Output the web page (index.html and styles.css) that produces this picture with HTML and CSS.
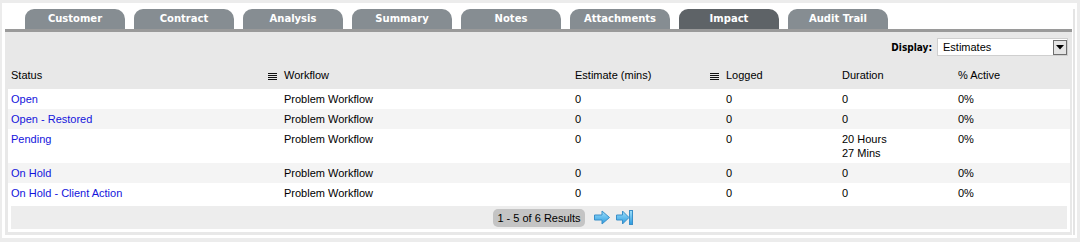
FILE: index.html
```html
<!DOCTYPE html>
<html lang="en">
<head>
  <meta charset="UTF-8">
  <title>Impact</title>
  <link rel="stylesheet" href="styles.css">
</head>
<body>
  <div class="page">
    <div class="frame">
      <ul class="tabs">
        <li>Customer</li>
        <li>Contract</li>
        <li>Analysis</li>
        <li>Summary</li>
        <li>Notes</li>
        <li>Attachments</li>
        <li class="active">Impact</li>
        <li>Audit Trail</li>
      </ul>

      <div class="panel">
        <div class="toolbar">
          <span class="toolbar-label">Display:</span>
          <div class="select">
            <span class="select-text">Estimates</span>
            <span class="select-btn">
              <svg width="8" height="5" viewBox="0 0 8 5"><polygon points="0,0 8,0 4,4.5" fill="#000"/></svg>
            </span>
          </div>
        </div>

        <table class="grid">
          <colgroup>
            <col style="width:273px">
            <col style="width:291px">
            <col style="width:151px">
            <col style="width:116px">
            <col style="width:116px">
            <col style="width:115px">
          </colgroup>
          <thead>
            <tr>
              <th>Status</th>
              <th><svg class="sort-icon" width="9" height="7" viewBox="0 0 9 7"><rect y="0" width="9" height="1"/><rect y="2" width="9" height="1"/><rect y="4" width="9" height="1"/><rect y="6" width="9" height="1"/></svg>Workflow</th>
              <th>Estimate (mins)</th>
              <th><svg class="sort-icon" width="9" height="7" viewBox="0 0 9 7"><rect y="0" width="9" height="1"/><rect y="2" width="9" height="1"/><rect y="4" width="9" height="1"/><rect y="6" width="9" height="1"/></svg>Logged</th>
              <th>Duration</th>
              <th>% Active</th>
            </tr>
          </thead>
          <tbody>
            <tr>
              <td><a href="#">Open</a></td>
              <td>Problem Workflow</td>
              <td>0</td>
              <td>0</td>
              <td>0</td>
              <td>0%</td>
            </tr>
            <tr>
              <td><a href="#">Open - Restored</a></td>
              <td>Problem Workflow</td>
              <td>0</td>
              <td>0</td>
              <td>0</td>
              <td>0%</td>
            </tr>
            <tr>
              <td><a href="#">Pending</a></td>
              <td>Problem Workflow</td>
              <td>0</td>
              <td>0</td>
              <td>20 Hours<br>27 Mins</td>
              <td>0%</td>
            </tr>
            <tr>
              <td><a href="#">On Hold</a></td>
              <td>Problem Workflow</td>
              <td>0</td>
              <td>0</td>
              <td>0</td>
              <td>0%</td>
            </tr>
            <tr>
              <td><a href="#">On Hold - Client Action</a></td>
              <td>Problem Workflow</td>
              <td>0</td>
              <td>0</td>
              <td>0</td>
              <td>0%</td>
            </tr>
          </tbody>
          <tfoot>
            <tr>
              <td colspan="6">
                <div class="pager">
                  <span></span>
                  <span class="pager-count">1 - 5 of 6 Results</span>
                  <span class="pager-nav">
                    <svg width="16" height="15" viewBox="0 0 16 15">
                      <defs>
                        <linearGradient id="ga" x1="0" y1="0" x2="0" y2="1">
                          <stop offset="0" stop-color="#9fe0fb"/>
                          <stop offset="1" stop-color="#2b9be0"/>
                        </linearGradient>
                      </defs>
                      <polygon points="0.5,5 8,5 8,1 15.5,7.5 8,14 8,10 0.5,10" fill="url(#ga)" stroke="#3a8fc8" stroke-width="1"/>
                    </svg>
                    <svg width="17" height="15" viewBox="0 0 17 15">
                      <defs>
                        <linearGradient id="gb" x1="0" y1="0" x2="0" y2="1">
                          <stop offset="0" stop-color="#9fe0fb"/>
                          <stop offset="1" stop-color="#2b9be0"/>
                        </linearGradient>
                      </defs>
                      <polygon points="0.5,5 6.5,5 6.5,1 13,7.5 6.5,14 6.5,10 0.5,10" fill="url(#gb)" stroke="#3a8fc8" stroke-width="1"/>
                      <rect x="13.5" y="0.5" width="3" height="14" fill="url(#gb)" stroke="#3a8fc8" stroke-width="1"/>
                    </svg>
                  </span>
                </div>
              </td>
            </tr>
          </tfoot>
        </table>
      </div>
    </div>
  </div>
</body>
</html>
```

FILE: styles.css
```css
body {
  margin: 0;
  padding: 3px 3px 4px 2px;
  background-color: #ececec;
  font-family: "Liberation Sans", Arial, sans-serif;
  font-size: 11px;
  color: #000;
}

.page {
  background-color: #fff;
  padding: 6px 2px 3px 3px;
}

.frame {
  border-right: 2px solid #e4e4e4;
  padding-right: 1px;
}

/* tabs */
.tabs {
  list-style: none;
  margin: 0 0 0 20px;
  padding: 0;
  display: flex;
  gap: 9px;
}

.tabs li {
  width: 100px;
  height: 20px;
  line-height: 20px;
  text-align: center;
  background-color: #868d92;
  color: #fff;
  font-family: "DejaVu Sans", Verdana, sans-serif;
  font-weight: bold;
  font-size: 10px;
  border-radius: 9px 10px 0 0;
}

.tabs li.active {
  background-color: #5e6367;
}

/* panel */
.panel {
  border-top: 3px solid #9a9a9a;
  background-color: #e8e8e8;
  padding: 6px 2px 3px 3px;
}

.toolbar {
  display: flex;
  justify-content: flex-end;
  align-items: center;
  gap: 5px;
  padding-right: 2px;
  height: 18px;
}

.toolbar-label {
  font-family: "DejaVu Sans Condensed", "DejaVu Sans", sans-serif;
  font-weight: bold;
  font-size: 10px;
}

.select {
  width: 129px;
  height: 16px;
  background-color: #fff;
  border: 1px solid #cfcfcf;
  display: flex;
  align-items: center;
  justify-content: space-between;
}

.select-text {
  padding-left: 5px;
}

.select-btn {
  width: 14px;
  height: 15px;
  border: 1px solid #6e6e6e;
  background-color: #e4e4e4;
  display: flex;
  align-items: center;
  justify-content: center;
  box-sizing: border-box;
  margin-right: 0;
}

/* grid */
.grid {
  width: 1062px;
  table-layout: fixed;
  border-collapse: collapse;
}

.grid th {
  text-align: left;
  font-weight: normal;
  padding: 13px 3px 7px;
  line-height: 13px;
  vertical-align: bottom;
  white-space: nowrap;
}

.grid td {
  padding: 3px;
  line-height: 14px;
  vertical-align: top;
}

.grid tbody tr {
  background-color: #fff;
}

.grid tbody tr:nth-child(even) {
  background-color: #f4f4f4;
}

.grid a {
  color: #1414dc;
  text-decoration: none;
}

.sort-icon {
  fill: #111;
  margin-left: -16px;
  margin-right: 7px;
  vertical-align: -1px;
}

.grid tfoot td {
  background-color: #fff;
  padding: 3px;
}

.pager {
  height: 23px;
  background-color: #ededed;
  display: grid;
  grid-template-columns: 1fr auto 1fr;
  align-items: center;
}

.pager-count {
  background-color: #c4c4c4;
  border-radius: 5px;
  padding: 0 4px;
  height: 18px;
  line-height: 18px;
}

.pager-nav {
  display: flex;
  gap: 6px;
  padding-left: 9px;
  align-items: center;
}
```
